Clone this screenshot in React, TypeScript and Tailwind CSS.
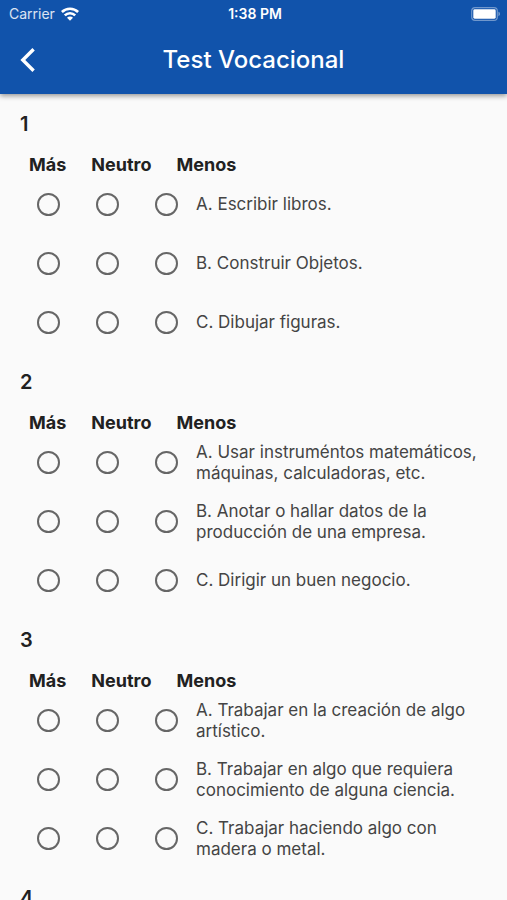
import { useState } from "react";

type Question = {
  id: number;
  options: string[];
};

const CHOICES = ["Más", "Neutro", "Menos"];

const QUESTIONS: Question[] = [
  {
    id: 1,
    options: ["A. Escribir libros.", "B. Construir Objetos.", "C. Dibujar figuras."],
  },
  {
    id: 2,
    options: [
      "A. Usar instruméntos matemáticos, máquinas, calculadoras, etc.",
      "B. Anotar o hallar datos de la producción de una empresa.",
      "C. Dirigir un buen negocio.",
    ],
  },
  {
    id: 3,
    options: [
      "A. Trabajar en la creación de algo artístico.",
      "B. Trabajar en algo que requiera conocimiento de alguna ciencia.",
      "C. Trabajar haciendo algo con madera o metal.",
    ],
  },
  { id: 4, options: [] },
];

function StatusBar() {
  return (
    <div className="grid h-7 grid-cols-3 items-center pr-[6px] pl-[9px] text-sm leading-none">
      <div className="flex items-center gap-[6px] text-white/85">
        <span>Carrier</span>
        <svg viewBox="0 0 18 14" className="h-[14px] w-[18px]" fill="none" stroke="white" strokeWidth="2.6">
          <path d="M0.9 5a11.6 11.6 0 0 1 16.2 0" />
          <path d="M3.8 8.4a7.4 7.4 0 0 1 10.4 0" />
          <path d="M9 13.8 6 10.8a4.2 4.2 0 0 1 6 0Z" fill="white" stroke="none" />
        </svg>
      </div>
      <span className="text-center font-semibold">1:38 PM</span>
      <svg viewBox="0 0 30 14" className="h-[14px] w-[30px] justify-self-end">
        <rect x="0.7" y="0.7" width="25.6" height="12.6" rx="3.4" fill="none" stroke="white" strokeOpacity="0.4" strokeWidth="1.2" />
        <rect x="2.3" y="2.3" width="22.4" height="9.4" rx="1.4" fill="white" />
        <path d="M27.5 4.8c1.8.6 1.8 3.8 0 4.4Z" fill="white" fillOpacity="0.5" />
      </svg>
    </div>
  );
}

function Header() {
  return (
    <header className="relative z-10 shrink-0 bg-[#1153ab] text-white shadow-[0_2px_5px_rgba(0,0,0,0.4)]">
      <StatusBar />
      <div className="grid h-[66px] grid-cols-[56px_1fr_56px] items-center pb-[2px]">
        <button type="button" aria-label="Volver" className="flex h-12 items-center pl-5">
          <svg viewBox="0 0 16 24" className="h-6 w-4" fill="none" stroke="white" strokeWidth="3.4">
            <path d="M13.6 1.2 2.8 12l10.8 10.8" />
          </svg>
        </button>
        <h1 className="text-center text-2xl font-medium">Test Vocacional</h1>
      </div>
    </header>
  );
}

function QuestionBlock({ question }: { question: Question }) {
  // selected choice for every option, by its index
  const [answers, setAnswers] = useState<Record<number, string>>({});

  return (
    <section className="pt-4">
      <h2 className="pl-5 text-xl leading-7 font-semibold">{question.id}</h2>
      {question.options.length > 0 && (
        <div className="mt-4 flex gap-[25px] pl-[29px] text-lg leading-[21px] font-bold">
          {CHOICES.map((choice) => (
            <span key={choice} id={`q${question.id}-${choice}`}>{choice}</span>
          ))}
        </div>
      )}
      {question.options.map((option, i) => (
        <div
          key={option}
          role="radiogroup"
          aria-labelledby={`q${question.id}-option${i}`}
          className="flex h-[59px] items-center pr-5 pl-[19px]"
        >
          {CHOICES.map((choice) => (
            <div key={choice} className="flex w-[59px] shrink-0 justify-center">
              <input
                type="radio"
                name={`q${question.id}-${i}`}
                value={choice}
                aria-labelledby={`q${question.id}-${choice}`}
                checked={answers[i] === choice}
                onChange={() => setAnswers({ ...answers, [i]: choice })}
                className="size-[23px] appearance-none rounded-full border-2 border-[#666666] checked:border-[#1153ab] checked:bg-[#1153ab] checked:bg-clip-content checked:p-[3px]"
              />
            </div>
          ))}
          <p id={`q${question.id}-option${i}`} className="text-[17px] leading-[21px] text-[#444444]">
            {option}
          </p>
        </div>
      ))}
    </section>
  );
}

export default function App() {
  return (
    <div className="flex h-screen flex-col bg-[#fafafa] font-['Inter',sans-serif] text-[#212121]">
      <Header />
      <main className="flex-1 overflow-y-auto [scrollbar-width:none]">
        {QUESTIONS.map((question) => (
          <QuestionBlock key={question.id} question={question} />
        ))}
      </main>
    </div>
  );
}
